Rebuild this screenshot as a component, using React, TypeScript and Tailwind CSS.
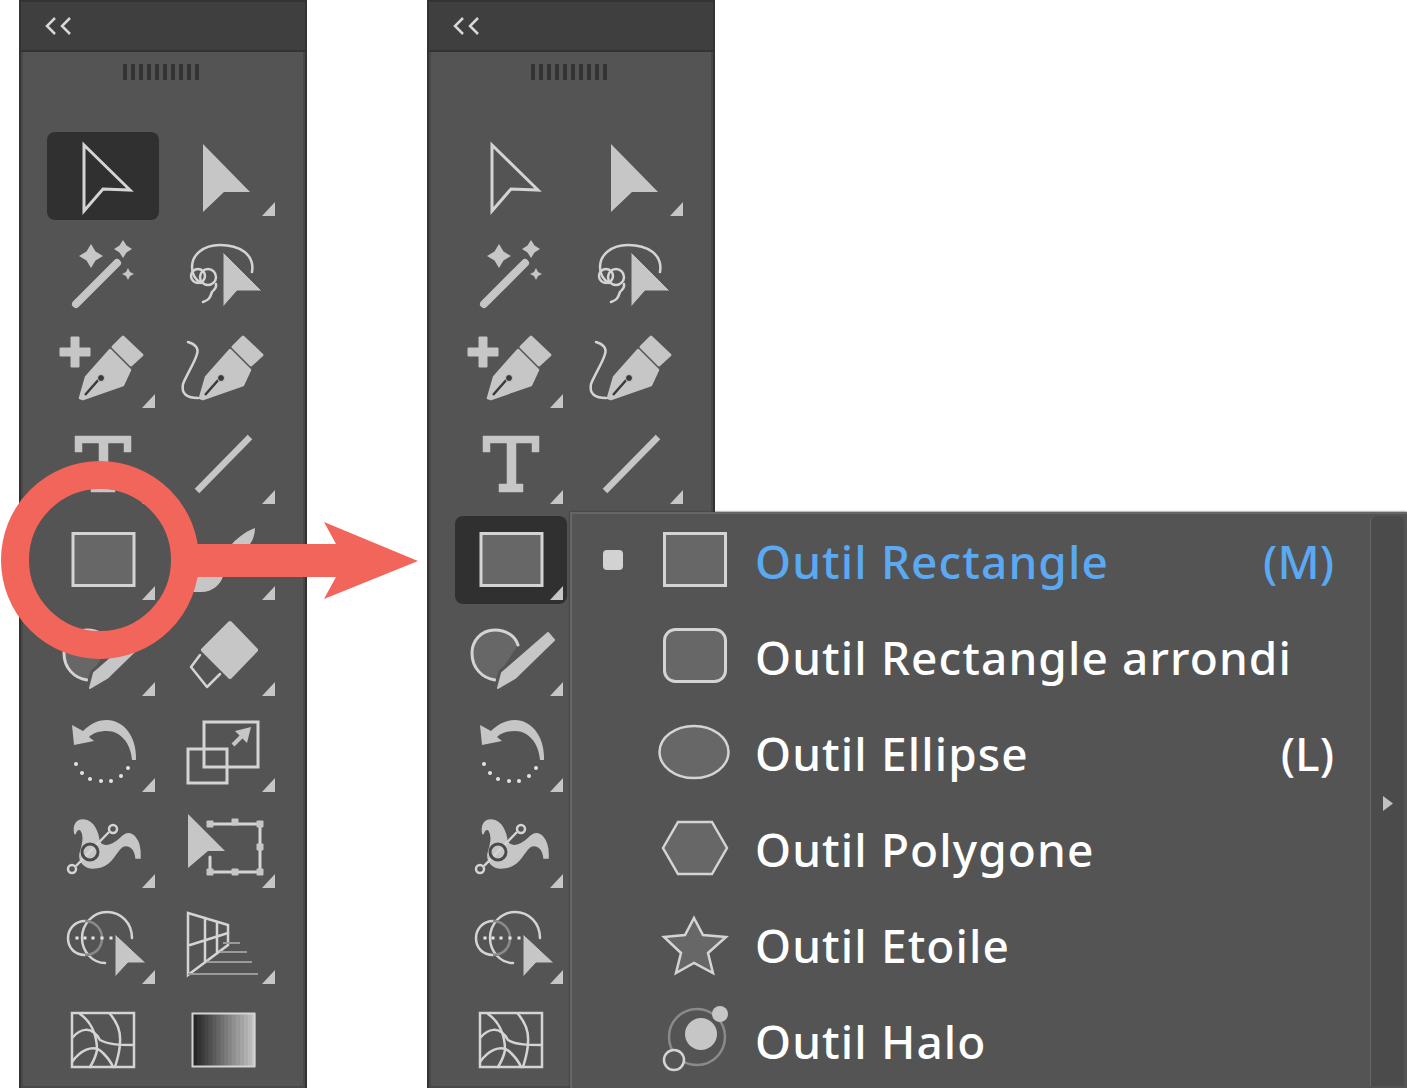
import type { ReactNode } from "react"

const LIGHT = "#c6c6c6"
const EDGE = "#d4d4d4"
const BODY = "#676767"

const Stroke = ({ children, w = 3 }: { children: ReactNode; w?: number }) => (
  <g fill="none" stroke={EDGE} strokeWidth={w} strokeLinecap="round" strokeLinejoin="round">
    {children}
  </g>
)

const Nib = () => (
  <>
    <path d="M37 78 L43 57 L67 30 L87 50 L80 65 L40 79 Z" fill={LIGHT} stroke={LIGHT} strokeWidth="2.5" strokeLinejoin="round" />
    <path d="M80 17 L99 35 L88 45 L70 27 Z" fill={LIGHT} stroke={LIGHT} strokeWidth="3" strokeLinejoin="round" />
    <path d="M42 75 L57 58" stroke="#3a3a3a" strokeWidth="2.5" />
    <circle cx="58" cy="58" r="3.5" fill="#3a3a3a" stroke={LIGHT} />
  </>
)

const icons: Record<string, ReactNode> = {
  select: (
    <Stroke>
      <path d="M41 17 L87 62 L60 61 L41 83 Z" strokeLinejoin="miter" />
    </Stroke>
  ),
  direct: <path d="M40 16 L87 64 L61 64 L40 84 Z" fill={LIGHT} />,
  wand: (
    <>
      <path d="M33 80 L74 39" stroke={LIGHT} strokeWidth="8" strokeLinecap="round" />
      <path d="M48 20 L52.5 27.5 L60 32 L52.5 36.5 L48 44 L43.5 36.5 L36 32 L43.5 27.5 Z" fill={LIGHT} />
      <path d="M80 16 L83.5 21.5 L89 25 L83.5 28.5 L80 34 L76.5 28.5 L71 25 L76.5 21.5 Z" fill={LIGHT} />
      <path d="M85 44 L87 48 L91 50 L87 52 L85 56 L83 52 L79 50 L83 48 Z" fill={LIGHT} />
    </>
  ),
  lasso: (
    <>
      <Stroke w={2.5}>
        <path d="M89 48 C92 30 76 21 57 21 C40 21 29 31 29 43 C29 52 33 56 38 59" />
        <circle cx="35" cy="52" r="7" />
        <circle cx="45" cy="53" r="8" />
        <path d="M53 60 C54 65 50 66 49 68 C47 74 46 76 40 78" />
      </Stroke>
      <path d="M60 28 L99 67 L74 67 L60 83 Z" fill={LIGHT} stroke="#555" strokeWidth="1" />
    </>
  ),
  penAdd: (
    <>
      <path d="M28 17 H36 V28 H47 V36 H36 V47 H28 V36 H17 V28 H28 Z" fill={LIGHT} stroke={LIGHT} strokeWidth="1" strokeLinejoin="round" />
      <Nib />
    </>
  ),
  penCurve: (
    <>
      <Stroke w={2.5}>
        <path d="M25 22 C32 24 36 28 34 34 C32 42 24 54 20 64 C18 74 24 78 35 78" />
      </Stroke>
      <Nib />
    </>
  ),
  type: (
    <path
      d="M32 20 H88 V36 H81 V27 H65 V68 H72 V76 H48 V68 H56 V27 H39 V36 H32 Z"
      fill={LIGHT}
      stroke={LIGHT}
      strokeWidth="0.5"
      strokeLinejoin="round"
    />
  ),
  line: <path d="M34 75 L87 21" stroke={LIGHT} strokeWidth="6.5" />,
  rect: <rect x="30" y="21.5" width="61" height="52" fill={BODY} stroke={EDGE} strokeWidth="3" />,
  brush: (
    <path
      d="M92 16 C86 18 76 24 69 32 L50 55 L60 64 C58 72 50 80 38 80 L30 80 L30 60 L62 62 L87 32 C90 28 92 22 92 16 Z"
      fill={LIGHT}
    />
  ),
  blob: (
    <>
      <path d="M67 37 C64 27 54 22 44 22 C30 22 21 33 21 45 C21 60 31 70 44 72 L67 37 Z" fill={BODY} />
      <Stroke>
        <path d="M67 37 C64 27 54 22 44 22 C30 22 21 33 21 45 C21 60 31 70 44 72" />
      </Stroke>
      <path d="M47 80 L51 65 L97 25 L103 32 L64 70 Z" fill="#555" stroke="#555" strokeWidth="8" strokeLinejoin="round" />
      <path d="M47 80 L51 65 L97 25 L103 32 L64 70 Z" fill={LIGHT} stroke={LIGHT} strokeWidth="2" strokeLinejoin="round" />
    </>
  ),
  eraser: (
    <>
      <path d="M67 15 L93 42 L67 69 L40 42 Z" fill={LIGHT} stroke={LIGHT} strokeWidth="4" strokeLinejoin="round" />
      <Stroke w={2.5}>
        <path d="M37 47 L28 59 L44 79 L57 66" />
      </Stroke>
    </>
  ),
  rotate: (
    <>
      <path
        d="M29 21 L40 27 C48 19 56 16 64 16 C80 16 94 32 93 56 L89 56 C88 40 78 27 64 27 C56 27 50 29 46 33 L51 37 L31 41 Z"
        fill={LIGHT}
      />
      {[
        [33, 60],
        [39, 69],
        [47, 75],
        [58, 77],
        [68, 77],
        [78, 72],
        [85, 64],
      ].map(([cx, cy]) => (
        <circle key={cx} cx={cx} cy={cy} r="2" fill="#e4e4e4" />
      ))}
    </>
  ),
  scale: (
    <>
      <Stroke>
        <rect x="41" y="18" width="54" height="45" strokeLinejoin="miter" />
        <rect x="25" y="45" width="39" height="34" strokeLinejoin="miter" />
      </Stroke>
      <path d="M70 41 L82 29" stroke={LIGHT} strokeWidth="4" />
      <path d="M72 27 L88 23 L84 39 Z" fill={LIGHT} />
    </>
  ),
  puppet: (
    <>
      <path
        d="M32 34 C30 26 33 20 40 20 C50 20 55 32 56 42 C62 50 72 44 80 36 C88 30 98 38 97 58 L93 58 C92 48 86 44 80 46 C72 50 70 68 50 68 C42 68 36 62 37 54 C40 44 42 36 38 30 C36 28 33 30 32 34 Z"
        fill={LIGHT}
        stroke={LIGHT}
        strokeWidth="1.5"
      />
      <path d="M33 66 L66 32" stroke={EDGE} strokeWidth="2.5" />
      <circle cx="70" cy="29" r="4" fill="#555" stroke={EDGE} strokeWidth="2.5" />
      <circle cx="29" cy="69" r="4" fill="#555" stroke={EDGE} strokeWidth="2.5" />
      <circle cx="47" cy="52" r="8" fill="none" stroke="#4a4a4a" strokeWidth="3" />
    </>
  ),
  free: (
    <>
      <Stroke>
        <path d="M47 24 H97 V72 H47 V57" strokeLinejoin="miter" />
      </Stroke>
      {[
        [47, 24],
        [72, 22],
        [97, 24],
        [97, 47],
        [97, 72],
        [72, 72],
        [47, 72],
      ].map(([x, y]) => (
        <rect key={`${x}-${y}`} x={x - 3.5} y={y - 3.5} width="7" height="7" fill={LIGHT} rx="1" />
      ))}
      <path d="M25 14 L62 51 L45 51 L25 68 Z" fill={LIGHT} />
    </>
  ),
  builder: (
    <>
      <Stroke w={2.5}>
        <path d="M42 25 C32 25 25 33 25 42 C25 52 32 59 42 59" />
        <path d="M62 67 C50 67 39 56 39 42 C39 28 50 16 64 16 C78 16 89 27 89 42" />
      </Stroke>
      <path d="M42 25 C52 25 59 33 59 42 C59 52 52 59 42 59" fill="none" stroke="#8a8a8a" strokeWidth="2.5" />
      {[34, 42, 50, 59, 68].map((cx) => (
        <rect key={cx} x={cx - 1.5} y="40.5" width="3" height="3" fill="#e8e8e8" />
      ))}
      <path d="M72 38 L103 67 L85 67 L72 81 Z" fill={LIGHT} stroke="#555" strokeWidth="1" />
    </>
  ),
  perspective: (
    <>
      <Stroke w={2.5}>
        <path d="M25 17 L65 29 L65 49 L25 79 Z" strokeLinejoin="miter" />
        <path d="M42 22 V66 M54 26 V56 M27 49 L65 37" />
      </Stroke>
      <path d="M60 47 H77 M57 56 H84 M44 66 H89 M25 78 H95" stroke="#9a9a9a" strokeWidth="2" />
    </>
  ),
  mesh: (
    <>
      <Stroke w={2.5}>
        <rect x="29" y="21" width="62" height="54" strokeLinejoin="miter" />
        <path d="M30 45 C36 38 48 32 57 48 C66 53 78 53 90 53" />
        <path d="M37 22 C46 28 54 40 54 58 C53 65 50 70 47 75" />
        <path d="M67 22 C74 30 78 38 77 50 C77 60 74 68 72 75" />
        <path d="M29 70 C36 60 50 50 60 61 C65 66 68 70 70 75" />
      </Stroke>
    </>
  ),
  gradient: (
    <>
      {Array.from({ length: 16 }).map((_, i) => {
        const v = Math.round(38 + i * 10.5)
        return <rect key={i} x={30 + i * 3.875} y="22" width="4.2" height="52" fill={`rgb(${v},${v},${v})`} />
      })}
      <rect x="29.5" y="21.5" width="62" height="53" fill="none" stroke={EDGE} strokeWidth="2" />
    </>
  ),
}

type Tool = { icon: string; more?: boolean }

const tools: Tool[] = [
  { icon: "select" },
  { icon: "direct", more: true },
  { icon: "wand" },
  { icon: "lasso" },
  { icon: "penAdd", more: true },
  { icon: "penCurve" },
  { icon: "type", more: true },
  { icon: "line", more: true },
  { icon: "rect", more: true },
  { icon: "brush", more: true },
  { icon: "blob", more: true },
  { icon: "eraser", more: true },
  { icon: "rotate", more: true },
  { icon: "scale", more: true },
  { icon: "puppet", more: true },
  { icon: "free", more: true },
  { icon: "builder", more: true },
  { icon: "perspective", more: true },
  { icon: "mesh" },
  { icon: "gradient" },
]

function ToolCell({ tool, active }: { tool: Tool; active: boolean }) {
  return (
    <div className="relative h-24 w-[120px]">
      {active && <div className="absolute inset-1 rounded-lg bg-[#303030]" />}
      <svg viewBox="0 0 120 96" className="relative h-24 w-[120px]">
        {icons[tool.icon]}
        {tool.more && <path d="M99 88 H112 V74 Z" fill={LIGHT} />}
      </svg>
    </div>
  )
}

function ToolPanel({ active }: { active: string }) {
  return (
    <div className="flex h-[1088px] w-[288px] flex-col border-x-2 border-[#333] bg-[#545454]">
      <div className="flex h-[52px] shrink-0 items-center border-y-2 border-[#333] bg-[#3f3f3f] pl-[24px]">
        <svg viewBox="0 0 28 18" className="h-[18px] w-[28px]" fill="none" stroke="#d8d8d8" strokeWidth="2.5">
          <path d="M10 1 L2 9 L10 17 M25 1 L17 9 L25 17" />
        </svg>
      </div>
      <div className="flex min-h-0 flex-1 flex-col border-x-2 border-b-2 border-[#484848]">
        <div className="mt-[12px] ml-[100px] flex gap-1">
          {Array.from({ length: 10 }).map((_, i) => (
            <div key={i} className="h-4 w-1 bg-[#343434]" />
          ))}
        </div>
        <div className="mt-[48px] ml-[20px] grid grid-cols-[120px_120px]">
          {tools.map((t) => (
            <ToolCell key={t.icon} tool={t} active={t.icon === active} />
          ))}
        </div>
      </div>
    </div>
  )
}

const shapes = [
  { label: "Outil Rectangle", key: "(M)", current: true, icon: <rect x="10.5" y="21.5" width="61" height="52" fill={BODY} stroke={EDGE} strokeWidth="3" /> },
  { label: "Outil Rectangle arrondi", icon: <rect x="10.5" y="21.5" width="61" height="52" rx="11" fill={BODY} stroke={EDGE} strokeWidth="3" /> },
  { label: "Outil Ellipse", key: "(L)", icon: <ellipse cx="40" cy="48" rx="34.5" ry="26" fill={BODY} stroke={EDGE} strokeWidth="2.5" /> },
  { label: "Outil Polygone", icon: <path d="M9 48 L24 22 H58 L73 48 L58 74 H24 Z" fill={BODY} stroke={EDGE} strokeWidth="2.5" /> },
  { label: "Outil Etoile", icon: <path d="M40 22 L49 39 L72 41 L54 57 L59 77 L40 67 L22 77 L27 57 L10 41 L31 39 Z" fill={BODY} stroke={EDGE} strokeWidth="2.5" strokeLinejoin="miter" /> },
  {
    label: "Outil Halo",
    icon: (
      <>
        <circle cx="43" cy="45" r="28" fill="none" stroke="#8a8a8a" strokeWidth="2.5" />
        <circle cx="47" cy="42" r="16" fill={LIGHT} />
        <circle cx="66" cy="22" r="8" fill={LIGHT} />
        <circle cx="20" cy="68" r="10" fill="#555" stroke={EDGE} strokeWidth="2.5" />
      </>
    ),
  },
]

function Flyout() {
  return (
    <div className="absolute left-[570px] top-[512px] flex h-[576px] w-[837px] border-t-2 border-l-2 border-[#666] bg-[#545454] shadow-[0_0_2px_#333]">
      <div className="-mt-[2px] flex-1">
        {shapes.map((s) => (
          <div key={s.label} className={`flex h-24 items-center ${s.current ? "text-[#5aa9f2]" : "text-white"}`}>
            <div className="ml-[31px] h-5 w-5">
              {s.current && <div className="h-5 w-5 rounded-sm bg-[#d2d2d2]" />}
            </div>
            <svg viewBox="0 0 80 96" className="ml-[31px] h-24 w-20">
              {s.icon}
            </svg>
            <span className="mt-[2px] ml-[21px] flex-1 font-['Noto_Sans',sans-serif] text-[46px] leading-none font-medium tracking-[1.1px]">{s.label}</span>
            {s.key && <span className="mt-[2px] font-['Noto_Sans',sans-serif] text-[46px] leading-none font-medium">{s.key}</span>}
            <div className="w-[36px]" />
          </div>
        ))}
      </div>
      <div className="my-[2px] mr-[3px] flex w-[34px] items-center justify-center rounded-t-md border-l border-[#666] bg-[#4b4b4b] pt-[4px]">
        <svg viewBox="0 0 10 15" className="h-[15px] w-[10px]">
          <path d="M0 0 L10 7.5 L0 15 Z" fill="#c0c0c0" />
        </svg>
      </div>
    </div>
  )
}

export default function App() {
  return (
    <div className="relative h-[1088px] w-[1407px] overflow-hidden bg-white">
      <div className="flex gap-[120px] pl-[19px]">
        <ToolPanel active="select" />
        <ToolPanel active="rect" />
      </div>
      <Flyout />
      <div className="absolute left-[1px] top-[461px] h-[198px] w-[198px] rounded-full border-[28px] border-[#f2655a]" />
      <svg viewBox="0 0 240 80" className="absolute left-[180px] top-[520px] h-20 w-[240px]">
        <path d="M0 24 H156 L144 2 L238 41 L144 79 L156 57 H0 Z" fill="#f2655a" />
      </svg>
    </div>
  )
}
